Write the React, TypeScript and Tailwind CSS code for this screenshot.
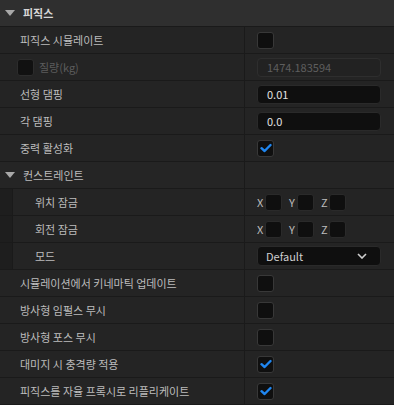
import React from 'react'

const font = { fontFamily: '"Noto Sans CJK KR", "Noto Sans", sans-serif' }

const Arrow = () => (
  <svg width="10" height="6" viewBox="0 0 10 6" className="shrink-0">
    <path d="M0 0 L10 0 L5 6 Z" fill="#a8a8a8" />
  </svg>
)

const Check = ({ checked = false, disabled = false }: { checked?: boolean; disabled?: boolean }) => (
  <div
    className={`w-[17px] h-[17px] rounded-[3px] border flex items-center justify-center ${
      disabled ? 'bg-[#111111] border-[#2c2c2c]' : 'bg-[#0f0f0f] border-[#383838]'
    }`}
  >
    {checked && (
      <svg width="12" height="10" viewBox="0 0 12 10">
        <path d="M1.5 5.2 L4.6 8 L10.5 2" fill="none" stroke="#1f86f0" strokeWidth="2.4" strokeLinecap="round" strokeLinejoin="round" />
      </svg>
    )}
  </div>
)

const Row = ({
  label,
  children,
  indent = false,
  labelNode,
}: {
  label?: string
  children?: React.ReactNode
  indent?: boolean
  labelNode?: React.ReactNode
}) => (
  <div className="flex h-[27px] border-b border-[#1a1a1a] bg-[#242424]">
    <div className="w-[245px] flex border-r border-[#1a1a1a] shrink-0">
      {indent && <div className="w-[13px] bg-[#1e1e1e] border-r border-[#1a1a1a] shrink-0" />}
      <div className={`flex items-center ${indent ? 'pl-[22px]' : 'pl-[20px]'} text-[11px] text-[#bcbcbc]`}>
        {labelNode ?? label}
      </div>
    </div>
    <div className="flex-1 flex items-center pl-[12px]">{children}</div>
  </div>
)

const NumInput = ({ value, disabled = false }: { value: string; disabled?: boolean }) => (
  <div
    className={`w-[124px] h-[19px] rounded-[4px] border flex items-center pl-[9px] text-[11px] ${
      disabled ? 'bg-[#222222] border-[#2e2e2e] text-[#5e5e5e]' : 'bg-[#0f0f0f] border-[#2a2a2a] text-[#e2e2e2]'
    }`}
  >
    {value}
  </div>
)

const Axis = ({ l }: { l: string }) => (
  <div className="flex items-center">
    <span className="text-[11px] text-[#bdbdbd] w-[8px]">{l}</span>
    <div className="w-[17px] h-[17px] rounded-[3px] bg-[#0f0f0f] border border-[#2a2a2a]" />
  </div>
)

export default function App() {
  return (
    <div className="w-[394px] h-[405px] bg-[#242424] overflow-hidden" style={font}>
      <div className="flex items-center h-[27px] bg-[#2f2f2f] border-b border-[#1a1a1a] pl-[5px] gap-[8px]">
        <Arrow />
        <span className="text-[11px] text-[#d6d6d6] font-semibold">피직스</span>
      </div>
      <Row label="피직스 시뮬레이트">
        <Check />
      </Row>
      <Row
        labelNode={
          <div className="flex items-center -ml-[3px] gap-[5px]">
            <Check disabled />
            <span className="text-[#5c5c5c]">질량(kg)</span>
          </div>
        }
      >
        <NumInput value="1474.183594" disabled />
      </Row>
      <Row label="선형 댐핑">
        <NumInput value="0.01" />
      </Row>
      <Row label="각 댐핑">
        <NumInput value="0.0" />
      </Row>
      <Row label="중력 활성화">
        <Check checked />
      </Row>
      <div className="flex h-[27px] border-b border-[#1a1a1a] bg-[#252525]">
        <div className="w-[245px] flex items-center border-r border-[#1a1a1a] pl-[5px] gap-[8px] text-[11px] text-[#bcbcbc]">
          <Arrow />
          <span>컨스트레인트</span>
        </div>
      </div>
      <Row label="위치 잠금" indent>
        <div className="flex items-center gap-[7px]">
          <Axis l="X" />
          <Axis l="Y" />
          <Axis l="Z" />
        </div>
      </Row>
      <Row label="회전 잠금" indent>
        <div className="flex items-center gap-[7px]">
          <Axis l="X" />
          <Axis l="Y" />
          <Axis l="Z" />
        </div>
      </Row>
      <Row label="모드" indent>
        <div className="w-[124px] h-[20px] rounded-[4px] bg-[#0f0f0f] border border-[#2a2a2a] flex items-center justify-between pl-[8px] pr-[13px] text-[11px] text-[#d0d0d0]">
          <span>Default</span>
          <svg width="10" height="6" viewBox="0 0 10 6">
            <path d="M1 1 L5 5 L9 1" fill="none" stroke="#cfcfcf" strokeWidth="1.6" />
          </svg>
        </div>
      </Row>
      <Row label="시뮬레이션에서 키네마틱 업데이트">
        <Check />
      </Row>
      <Row label="방사형 임펄스 무시">
        <Check />
      </Row>
      <Row label="방사형 포스 무시">
        <Check />
      </Row>
      <Row label="대미지 시 충격량 적용">
        <Check checked />
      </Row>
      <Row label="피직스를 자율 프록시로 리플리케이트">
        <Check checked />
      </Row>
    </div>
  )
}
